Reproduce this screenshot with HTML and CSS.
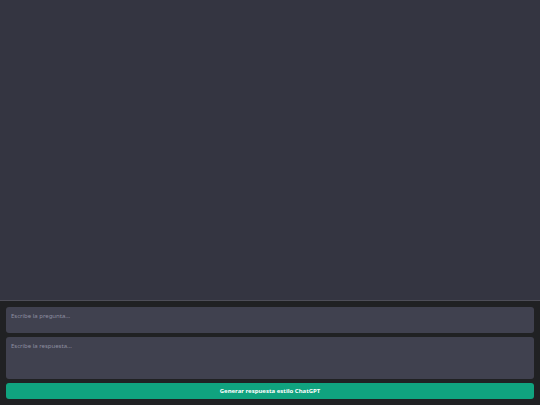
FILE: index.html
```html
<!DOCTYPE html>
<html lang="es">
<head>
<meta charset="utf-8">
<link rel="stylesheet" href="styles.css">
</head>
<body>
<div class="app">
  <main class="chat"></main>
  <div class="composer">
    <input class="field question" type="text" placeholder="Escribe la pregunta...">
    <textarea class="field answer" placeholder="Escribe la respuesta..."></textarea>
    <button class="generate">Generar respuesta estilo ChatGPT</button>
  </div>
</div>
</body>
</html>
```
FILE: styles.css
```css
html, body {
  margin: 0;
  padding: 0;
  height: 100%;
  background: #343541;
  font-family: "Noto Sans", "Open Sans", sans-serif;
}
.app {
  display: flex;
  flex-direction: column;
  height: 405px;
}
.chat {
  flex: 1;
  background: #343541;
}
.composer {
  background: #202123;
  border-top: 1px solid #4d4d57;
  padding: 6px;
  display: flex;
  flex-direction: column;
  gap: 4px;
}
.field {
  box-sizing: border-box;
  width: 100%;
  margin: 0;
  background: #40414f;
  border: none;
  border-radius: 3px;
  color: #d9d9e3;
  font-family: inherit;
  font-size: 6px;
  padding: 5px;
  outline: none;
  resize: none;
}
.field::placeholder {
  color: #8e8ea0;
}
.question {
  height: 26px;
  padding-top: 0;
  padding-bottom: 8px;
}
.answer {
  height: 42px;
  display: block;
  padding-top: 5px;
}
.generate {
  height: 16px;
  margin: 0;
  border: none;
  border-radius: 3px;
  background: #10a37f;
  color: #ffffff;
  font-family: inherit;
  font-weight: 700;
  font-size: 6px;
  padding: 0;
}
```
